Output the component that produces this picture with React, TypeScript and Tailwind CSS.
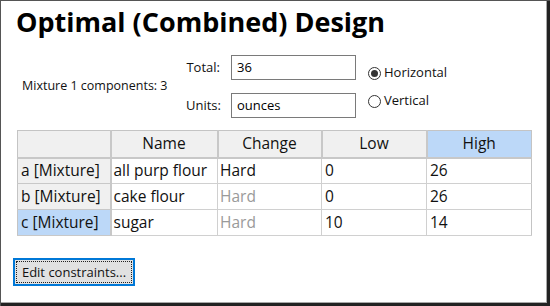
import React from 'react'

const rows = [
  { id: 'a [Mixture]', name: 'all purp flour', change: 'Hard', dim: false, low: '0', high: '26', sel: false },
  { id: 'b [Mixture]', name: 'cake flour', change: 'Hard', dim: true, low: '0', high: '26', sel: false },
  { id: 'c [Mixture]', name: 'sugar', change: 'Hard', dim: true, low: '10', high: '14', sel: true },
]

function Radio({ checked, label }: { checked: boolean; label: string }) {
  return (
    <div className="flex items-center gap-[3px] h-[18px]">
      <span className="w-[13px] h-[13px] rounded-full border border-[#333] bg-white flex items-center justify-center">
        {checked && <span className="w-[7px] h-[7px] rounded-full bg-[#333]" />}
      </span>
      <span className="text-[13px] text-[#111]">{label}</span>
    </div>
  )
}

export default function App() {
  return (
    <div
      className="w-[550px] h-[306px] bg-white border-l border-t border-[#555] relative overflow-hidden"
      style={{ fontFamily: '"Open Sans", "Noto Sans", sans-serif' }}
    >
      <div className="h-full border-r-[3px] border-b-[3px] border-[#222]">
        <div className="h-full border-r border-b border-[#a8a8a8] pl-[15px] pt-[4px]">
          <h1 className="text-[27px] font-bold leading-[34px] text-black">Optimal (Combined) Design</h1>

          <div className="flex mt-[16px] h-[63px]">
            <div className="w-[170px] flex items-center pl-[6px] text-[12.5px] text-[#111]">Mixture 1 components: 3</div>
            <div className="flex flex-col gap-[13px]">
              <div className="flex items-center">
                <span className="w-[45px] text-right pr-[11px] text-[13px] text-[#111]">Total:</span>
                <div className="w-[125px] h-[25px] border border-[#7a7a7a] px-[5px] text-[13px] leading-[23px]">36</div>
              </div>
              <div className="flex items-center">
                <span className="w-[45px] text-right pr-[11px] text-[13px] text-[#111]">Units:</span>
                <div className="w-[125px] h-[25px] border border-[#7a7a7a] px-[5px] text-[13px] leading-[23px]">ounces</div>
              </div>
            </div>
            <div className="flex flex-col pl-[12px] pt-[9px] gap-[10px]">
              <Radio checked label="Horizontal" />
              <Radio checked={false} label="Vertical" />
            </div>
          </div>

          <table className="table-fixed w-[514px] mt-[12px] ml-[1px] border-collapse border border-[#c4c4c4] text-[15.5px] text-[#111]">
            <colgroup>
              <col className="w-[93px]" />
              <col className="w-[107px]" />
              <col className="w-[104px]" />
              <col className="w-[105px]" />
              <col className="w-[105px]" />
            </colgroup>
            <thead>
              <tr className="h-[27px]">
                <th className="bg-[#f0f0f0] border-r-2 border-b-2 border-[#c8c8c8] font-normal" />
                <th className="bg-[#f0f0f0] border-r-2 border-b-2 border-[#c8c8c8] font-normal">Name</th>
                <th className="bg-[#f0f0f0] border-r-2 border-b-2 border-[#c8c8c8] font-normal">Change</th>
                <th className="bg-[#f0f0f0] border-r-2 border-b-2 border-[#c8c8c8] font-normal">Low</th>
                <th className="bg-[#bcd8f8] border-b-2 border-[#c8c8c8] font-normal">High</th>
              </tr>
            </thead>
            <tbody>
              {rows.map((r) => (
                <tr key={r.id} className="h-[26px]">
                  <td
                    className={
                      r.sel
                        ? 'bg-[#bcd8f8] border-r-2 border-b border-[#c8c8c8] pl-[3px] whitespace-nowrap'
                        : 'bg-[#f0f0f0] border-r-2 border-b border-[#c8c8c8] pl-[3px] whitespace-nowrap'
                    }
                  >
                    {r.id}
                  </td>
                  <td className="border-r border-b border-[#d0d0d0] pl-[2px] whitespace-nowrap">{r.name}</td>
                  <td className={r.dim ? 'border-r border-b border-[#d0d0d0] pl-[2px] text-[#9a9a9a]' : 'border-r border-b border-[#d0d0d0] pl-[2px]'}>
                    {r.change}
                  </td>
                  <td className="border-r border-b border-[#d0d0d0] pl-[3px]">{r.low}</td>
                  <td className="border-b border-[#d0d0d0] pl-[3px]">{r.high}</td>
                </tr>
              ))}
            </tbody>
          </table>

          <div className="mt-[22px] ml-[-3px]">
            <button className="w-[122px] h-[28px] border-2 border-[#0078d7] bg-[#e1e1e1] p-[1px]">
              <span className="block h-full border border-dotted border-[#222] text-[13px] leading-[20px] text-[#111]">
                Edit constraints...
              </span>
            </button>
          </div>
        </div>
      </div>
    </div>
  )
}
